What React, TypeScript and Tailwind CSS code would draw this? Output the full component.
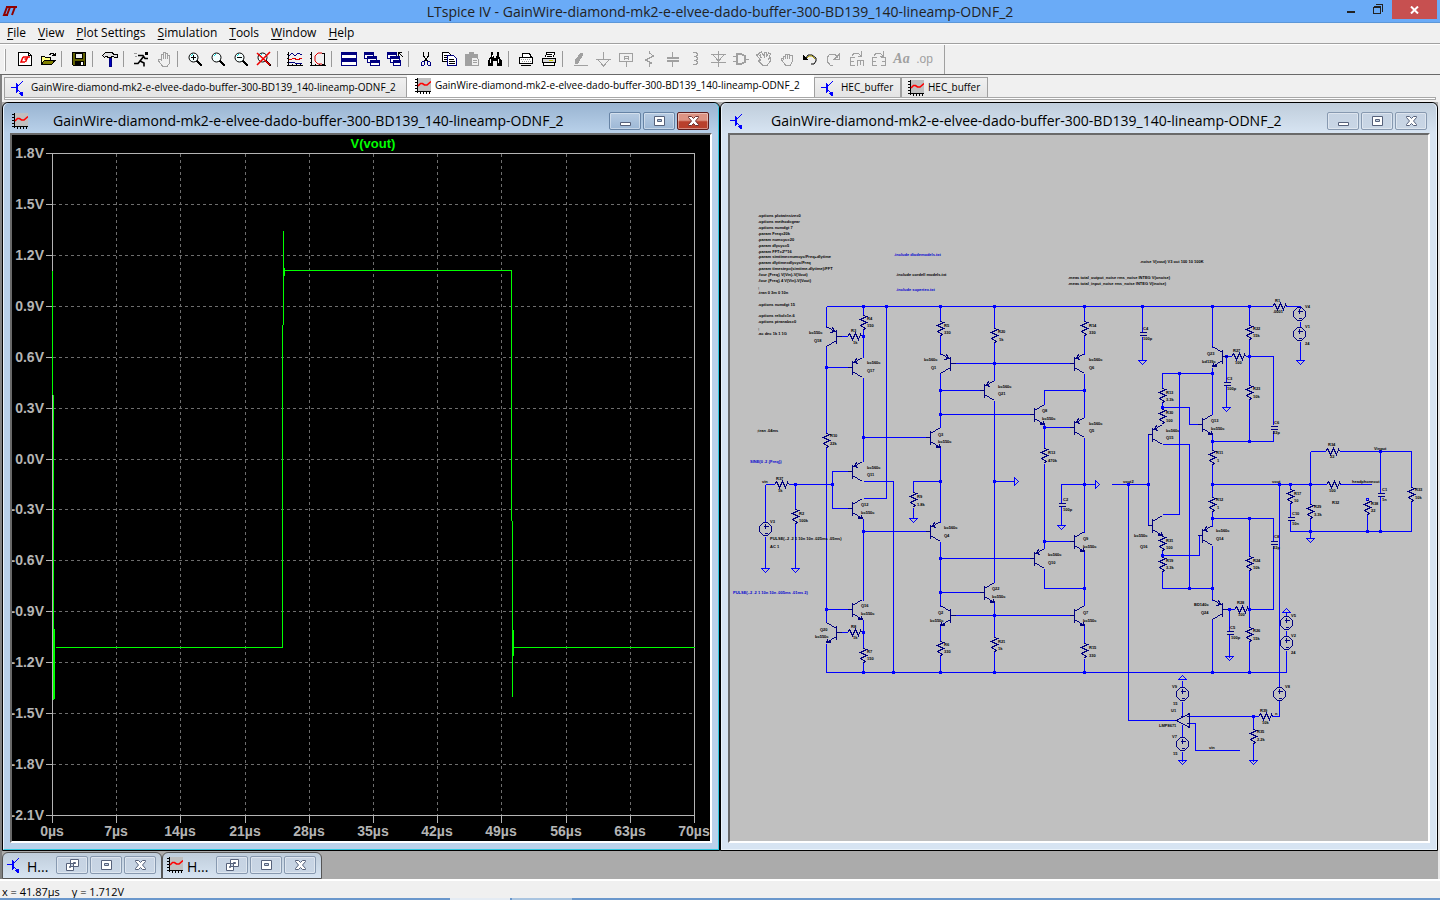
import type { ReactNode } from 'react'
import clsx from 'clsx'

const CIRCUIT = 'GainWire-diamond-mk2-e-elvee-dado-buffer-300-BD139_140-lineamp-ODNF_2'

const MENUS = ['File', 'View', 'Plot Settings', 'Simulation', 'Tools', 'Window', 'Help']

/* ---------- icons ---------- */

function Icon({ children, className }: { children: ReactNode; className?: string }) {
  return (
    <svg
      viewBox="0 0 16 16"
      className={clsx('h-4 w-4 shrink-0', className)}
      fill="none"
      stroke="currentColor"
      shapeRendering="crispEdges"
      aria-hidden="true"
    >
      {children}
    </svg>
  )
}

function SchematicIcon() {
  return (
    <Icon className="text-[#0000ff]">
      <path d="M5.5 3v10M6.5 4v8M0 7.5h6M6.5 6.5l5-5M6.5 9.5l5 5" />
      <path d="M8 13l4-1v4h-2z" fill="currentColor" stroke="none" />
    </Icon>
  )
}

function WaveIcon() {
  return (
    <Icon className="text-black">
      <path d="M2 0h14v14H2z" fill="#c0c0c0" stroke="none" />
      <path d="M2.5 0v15M0 13.5h16M0 1.5h2M0 4.5h2M0 7.5h2M0 10.5h2M5.5 14v2M8.5 14v2M11.5 14v2M14.5 14v2" />
      <path d="M3 8l2.5-2.5h2l2 1.5h2.5l4-3.5" stroke="#ff0000" strokeWidth="1.6" shapeRendering="auto" />
    </Icon>
  )
}

function Lens({ children }: { children?: ReactNode }) {
  return (
    <Icon className="text-black">
      <circle cx="6.5" cy="6.5" r="4.5" fill="#f4ffff" shapeRendering="auto" />
      <path d="M4 5l2-2" stroke="#00e0e0" />
      <path d="M10 10l5 5" strokeWidth="2" />
      {children}
    </Icon>
  )
}

type Tool = { name: string; icon: ReactNode; off?: boolean }

const TOOL_GROUPS: Tool[][] = [
  [
    {
      name: 'New Schematic',
      icon: (
        <Icon>
          <path d="M1.5 1.5h10l3 3v10h-13z" fill="#fff" />
          <path d="M11.5 1.5v3h3" />
          <path d="M6 6L4 11H8M6 6H13M10.5 6.5L8.5 11M7.5 8H9.5" stroke="#f00000" strokeWidth="1.5" shapeRendering="auto" />
        </Icon>
      ),
    },
    {
      name: 'Open',
      icon: (
        <Icon>
          <path d="M1.5 13.5v-8h3l1 1h5v3" fill="#ffff80" />
          <path d="M1.5 13.5l3-4.5h11l-4 4.5z" fill="#808000" />
          <path d="M9.5 3.5l2-1h2l1 2M12 4.5h3v-3" />
        </Icon>
      ),
    },
  ],
  [
    {
      name: 'Save',
      icon: (
        <Icon>
          <path d="M1.5 1.5h13v13h-12l-1-1z" fill="#606000" />
          <path d="M4.5 2h7v5h-7z" fill="#eee" />
          <path d="M4.5 10h8v4h-8z" fill="#000" />
          <path d="M10 11h2v3h-2z" fill="#fff" stroke="none" />
        </Icon>
      ),
    },
  ],
  [
    {
      name: 'Control Panel',
      icon: (
        <Icon>
          <path d="M.5 4.5l3-3h7l1 2h4v3h-3l-1-1h-2v1h-4v-1h-2l-1 1z" fill="#e0e0e0" />
          <path d="M7 7h2v8h-2z" fill="#0000c0" stroke="#000080" />
        </Icon>
      ),
    },
  ],
  [
    {
      name: 'Run',
      icon: (
        <Icon>
          <path d="M12 1h2v2h-2z" fill="#000" />
          <path d="M5 4.5h5l2 3h3M11 5l-4 5 4 2v3.5M7 10l-2 2.5h-4" strokeWidth="1.6" shapeRendering="auto" />
          <path d="M1 2.5h3M2 5.5h2" stroke="#999" />
        </Icon>
      ),
    },
    {
      name: 'Halt',
      off: true,
      icon: (
        <Icon>
          <path d="M5.5 9v-6h2v5v-7h2v7v-6h2v6v-4h2v8l-2 3h-5l-4-5v-2h2z" />
        </Icon>
      ),
    },
  ],
  [
    { name: 'Zoom to rectangle', icon: <Lens><path d="M4 6.5h5M6.5 4v5" /></Lens> },
    { name: 'Pan', icon: <Lens /> },
    { name: 'Zoom back', icon: <Lens><path d="M4 6.5h5" /></Lens> },
    {
      name: 'Zoom full extents',
      icon: (
        <Lens>
          <path d="M1 2l13 12M14 1l-13 13" stroke="#f00000" strokeWidth="1.6" shapeRendering="auto" />
        </Lens>
      ),
    },
  ],
  [
    {
      name: 'Autorange',
      icon: (
        <Icon>
          <path d="M1.5 1v14M0 14.5h16M0 3.5h2M0 7.5h2M0 11.5h2M5.5 13v2M9.5 13v2M13.5 13v2" />
          <path d="M2 5l3-3 3 3 3-3 4 2M2 11h5l1 1h7" stroke="#000080" />
          <path d="M2 8h3l2-1 3 2 5-2" stroke="#e00000" />
        </Icon>
      ),
    },
    {
      name: 'Pick visible traces',
      icon: (
        <Icon>
          <path d="M1.5 1v14M0 14.5h16M0 3.5h2M0 7.5h2M0 11.5h2M5.5 13v2M9.5 13v2M14.5 2v12M12 2.5h3M12 13.5h3" />
          <path d="M12 2h-4l-3 3v5l3 3h4" stroke="#e00000" shapeRendering="auto" />
        </Icon>
      ),
    },
  ],
  [
    {
      name: 'Tile Windows',
      icon: (
        <Icon className="text-[#000080]">
          <path d="M.5 1.5h15v6h-15zM.5 8.5h15v6h-15z" fill="#fff" />
          <path d="M1 3h14M1 10h14" strokeWidth="2" />
        </Icon>
      ),
    },
    {
      name: 'Cascade Windows',
      icon: (
        <Icon className="text-[#000080]">
          <path d="M.5 1.5h9v6h-9zM3.5 5.5h9v6h-9zM6.5 9.5h9v5h-9z" fill="#fff" />
          <path d="M1 2.5h8M4 6.5h8M7 10.5h8" strokeWidth="2" />
        </Icon>
      ),
    },
    {
      name: 'Close All Windows',
      icon: (
        <Icon className="text-[#000080]">
          <path d="M.5 1.5h9v6h-9zM3.5 5.5h9v6h-9zM6.5 9.5h7v5h-7z" fill="#fff" />
          <path d="M1 2.5h8M4 6.5h8M7 10.5h6" strokeWidth="2" />
          <path d="M11 1.5h4M11.5 1v4M12 2l4 4" stroke="#000" />
        </Icon>
      ),
    },
  ],
  [
    {
      name: 'Cut',
      icon: (
        <Icon>
          <path d="M5.5 1v4l4 5M10.5 1v4l-4 5" />
          <path d="M4.5 10.5h2v3l-1 1h-2v-3zM9.5 10.5h2l1 1v3h-2l-1-1z" stroke="#000080" />
        </Icon>
      ),
    },
    {
      name: 'Copy',
      icon: (
        <Icon>
          <path d="M1.5 1.5h6l2 2v7h-8z" fill="#fff" />
          <path d="M3 4.5h4M3 6.5h4M3 8.5h3" />
          <path d="M6.5 4.5h6l3 3v7h-9z" fill="#fff" stroke="#000080" />
          <path d="M8 8.5h5M8 10.5h6M8 12.5h6" />
        </Icon>
      ),
    },
    {
      name: 'Paste',
      off: true,
      icon: (
        <Icon>
          <path d="M1 3h12v11h-12z" fill="currentColor" />
          <path d="M5 1h4v3h-4z" fill="currentColor" />
          <path d="M7.5 6.5h5l2 2v6h-7z" fill="#f0f0f0" />
          <path d="M9 9.5h4M9 11.5h4" />
        </Icon>
      ),
    },
    {
      name: 'Find',
      icon: (
        <Icon>
          <path d="M4 1h2v4h1v2h2v-2h1v-4h2v4l3 5v5h-5v-5h-4v5h-5v-5l3-5z" fill="#000" stroke="none" />
          <path d="M3.5 8v4M11.5 8v4M5.5 4v2" stroke="#fff" />
        </Icon>
      ),
    },
  ],
  [
    {
      name: 'Print Setup',
      icon: (
        <Icon>
          <path d="M4.5 6.5v-4h7l2 4M1.5 6.5h13v6h-13z" fill="#fff" />
          <path d="M3 14.5h10" />
          <path d="M3 8.5h10M4 10.5h10" stroke="#999" strokeDasharray="1 1" />
        </Icon>
      ),
    },
    {
      name: 'Print',
      icon: (
        <Icon>
          <path d="M4.5 6.5l1-5h8l-1 5" fill="#fff" />
          <path d="M6 3.5h5M6 5.5h5" />
          <path d="M1.5 7.5h13v4h-13z" fill="#d8d8d8" />
          <path d="M2.5 11.5h11v3h-11z" fill="#fff" />
          <path d="M8 9.5h4" stroke="#d0d000" />
        </Icon>
      ),
    },
  ],
  [
    {
      name: 'Wire',
      off: true,
      icon: (
        <Icon>
          <path d="M3 10l6-8 2 1-5 9-3 1zM2 14.5h14" fill="currentColor" />
        </Icon>
      ),
    },
    { name: 'Ground', off: true, icon: <Icon><path d="M8.5 1v7M1 8.5h15M3 9l5.5 6 5.5-6" /></Icon> },
    {
      name: 'Label Net',
      off: true,
      icon: (
        <Icon>
          <path d="M1.5 2.5h13v8h-13zM8.5 11v5" />
          <path d="M6.5 9v-4h4v4M6.5 7.5h4" />
        </Icon>
      ),
    },
    { name: 'Resistor', off: true, icon: <Icon><path d="M8.5 0v2l4 3-8 4 6 3-2 1v3" /></Icon> },
    {
      name: 'Capacitor',
      off: true,
      icon: (
        <Icon>
          <path d="M8.5 1v6M8.5 10v6" />
          <path d="M3 7h12M3 10h12" strokeWidth="2" />
        </Icon>
      ),
    },
    { name: 'Inductor', off: true, icon: <Icon><path d="M6 1.5h3l1 1v2l-1 1h-2h2l1 1v2l-1 1h-2h2l1 1v2l-1 1h-3" /></Icon> },
    { name: 'Diode', off: true, icon: <Icon><path d="M8.5 0v16M1 3.5h15M3 4l5.5 6 5.5-6M1 11.5h15" /></Icon> },
    {
      name: 'Component',
      off: true,
      icon: (
        <Icon>
          <path d="M4 3h4l4 2v6l-4 2h-4z" strokeWidth="2" />
          <path d="M0 5.5h4M0 10.5h4M12 8.5h4" />
        </Icon>
      ),
    },
    {
      name: 'Move',
      off: true,
      icon: (
        <Icon>
          <path d="M4.5 9l-4-5 2-1 3 4-2-5 2-1 3 5v-5h2v5l2-4 2 1-2 5 2-1v3l-3 4h-5l-4-4z" />
        </Icon>
      ),
    },
    {
      name: 'Drag',
      off: true,
      icon: (
        <Icon>
          <path d="M4.5 9v-4h2v3v-5h2v5v-5h2v5v-4h3v6l-2 4h-5l-4-5v-2h2z" />
        </Icon>
      ),
    },
    {
      name: 'Undo',
      icon: (
        <Icon>
          <path d="M4 7l2-3h4l4 3v3l-2 3h-3" shapeRendering="auto" />
          <path d="M5 7l2-2h3l3 3" stroke="#b0a000" shapeRendering="auto" />
          <path d="M1 4v5h5z" fill="#000" stroke="none" />
        </Icon>
      ),
    },
    {
      name: 'Redo',
      off: true,
      icon: (
        <Icon>
          <path d="M13 7l-3-4h-5l-3 4v3l3 4h3M14.5 3v5h-5z" />
        </Icon>
      ),
    },
    {
      name: 'Rotate',
      off: true,
      icon: (
        <Icon>
          <path d="M7 6.5h-5M2.5 6v9M2 10.5h4M2 14.5h5M9 9.5h7M9.5 9v6M12.5 9v5M15.5 9v6" />
          <path d="M4 4.5l2-2h4l3 2M13.5 0v5h-4" />
        </Icon>
      ),
    },
    {
      name: 'Mirror',
      off: true,
      icon: (
        <Icon>
          <path d="M6 6.5h-5M1.5 6v9M1 10.5h4M1 14.5h5M10 6.5h5M14.5 6v9M15 10.5h-4M15 14.5h-5" />
          <path d="M3 4.5l2-2h4l3 2M12.5 0v5h-4" />
        </Icon>
      ),
    },
    { name: 'Text', off: true, icon: <span className="font-['Liberation_Serif',serif] text-sm leading-4 font-bold italic">Aa</span> },
    { name: 'SPICE Directive', off: true, icon: <span className="font-['Liberation_Sans',sans-serif] text-xs leading-4">.op</span> },
  ],
]

/* ---------- window chrome ---------- */

type CaptionKind = 'min' | 'restore' | 'max' | 'close'

const GLYPHS: Record<CaptionKind, ReactNode> = {
  min: <path d="M3.5 9.5h10v3h-10z" />,
  max: <path d="M3.5 3.5h10v9h-10zM6.5 6.5h4v2h-4z" />,
  restore: <path d="M6.5 2.5h8v7h-8zM9.5 5.5h2v1h-2zM2.5 6.5h7v7h-7zM5.5 9.5h1v1h-1z" />,
  close: <path d="M3.5 3.5h3l2 2 2-2h3v1l-3 3.5 3 3.5v1h-3l-2-2-2 2h-3v-1l3-3.5-3-3.5z" />,
}

function CaptionButton({ kind, active }: { kind: CaptionKind; active?: boolean }) {
  const red = active && kind === 'close'
  return (
    <button
      aria-label={kind}
      className={clsx(
        'flex h-[18px] w-8 items-center justify-center rounded-[2px] border shadow-[inset_0_0_0_1px_rgba(255,255,255,0.4)]',
        red && 'border-[#5c1d1d] bg-linear-to-b from-[#dd9484] from-45% to-[#b8402c] to-55%',
        !red && active && 'border-[#6683a5] bg-linear-to-b from-[#b7cbe2] to-[#9db8d6]',
        !red && !active && 'border-[#8799b0] bg-linear-to-b from-[#c6d3e3] to-[#c9d6e5]',
      )}
    >
      <svg viewBox="0 0 17 16" className="h-4 w-[17px]" fill="#fff" fillRule="evenodd" stroke={red ? '#6b3030' : '#56617a'}>
        {GLYPHS[kind]}
      </svg>
    </button>
  )
}

function ChildWindow({ active, icon, title, children }: { active?: boolean; icon: ReactNode; title: string; children: ReactNode }) {
  return (
    <section
      className={clsx(
        'flex min-w-0 flex-1 flex-col rounded-t-md border border-black',
        active ? 'bg-[#b9d1ea]' : 'bg-[#d7e4f2]',
      )}
    >
      <div
        className={clsx(
          'flex min-h-0 flex-1 flex-col rounded-t-md border border-t-0 px-1.5 pb-1.5',
          active ? 'border-l-[#e8f2fc] border-r-[#30c8e0] border-b-[#30c8e0]' : 'border-[#eaf3fb]',
        )}
      >
        <header
          className={clsx(
            '-mx-1.5 flex h-[30px] shrink-0 items-center gap-6 rounded-t-md bg-linear-to-b pt-1.5 pr-[9px] pl-2',
            active ? 'from-[#99b4d1] to-[#b9d1ea]' : 'from-[#bfcddb] to-[#d7e4f2]',
          )}
        >
          {icon}
          <h2 className="min-w-0 flex-1 truncate pl-px text-sm leading-5 text-black">{title}</h2>
          <div className="flex gap-0.5">
            <CaptionButton kind="min" active={active} />
            <CaptionButton kind="max" active={active} />
            <CaptionButton kind="close" active={active} />
          </div>
        </header>
        <div className="min-h-0 flex-1 border-2 border-t-[#696969] border-r-white border-b-white border-l-[#696969]">{children}</div>
      </div>
    </section>
  )
}

function MinimizedWindow({ icon }: { icon: ReactNode }) {
  return (
    <section className="flex h-[27px] w-40 items-center rounded-t-md border border-[#555] bg-linear-to-b from-[#bfcddb] to-[#d7e4f2] pr-[5px] pb-0.5 pl-1">
      {icon}
      <span className="flex-1 pt-1 pl-1 text-sm leading-5">H...</span>
      <div className="flex gap-0.5">
        <CaptionButton kind="restore" />
        <CaptionButton kind="max" />
        <CaptionButton kind="close" />
      </div>
    </section>
  )
}

/* ---------- waveform plot ---------- */

const VOLTS = ['1.8V', '1.5V', '1.2V', '0.9V', '0.6V', '0.3V', '0.0V', '-0.3V', '-0.6V', '-0.9V', '-1.2V', '-1.5V', '-1.8V', '-2.1V']
const PLOT = { left: 52, right: 694, top: 153, bottom: 815 }

function WaveformPlot() {
  const rows = VOLTS.map((label, i) => ({ label, y: Math.round(PLOT.top + (i * (PLOT.bottom - PLOT.top)) / 13) }))
  const cols = Array.from({ length: 11 }, (_, i) => ({
    label: `${i * 7}µs`,
    x: Math.round(PLOT.left + (i * (PLOT.right - PLOT.left)) / 10),
  }))
  return (
    <svg viewBox="12 135 698 706" className="block h-full w-full bg-black" fill="none" role="img" aria-label="V(vout) transient">
      <g transform="translate(.5 .5)" shapeRendering="crispEdges">
        <g stroke="#6e6e6e" strokeDasharray="3 3">
          {rows.slice(1, -1).map((r) => (
            <path key={r.label} d={`M${PLOT.left} ${r.y}H${PLOT.right}`} />
          ))}
          {cols.slice(1, -1).map((c) => (
            <path key={c.label} d={`M${c.x} ${PLOT.top}V${PLOT.bottom}`} />
          ))}
        </g>
        <g stroke="#b4b4b4">
          <path d="M52 153H694V815H52Z" />
          {rows.map((r) => (
            <path key={r.label} d={`M45 ${r.y}H52`} />
          ))}
          {cols.map((c) => (
            <path key={c.label} d={`M${c.x} 815V822`} />
          ))}
        </g>
        <path
          d="M52 270V394M53 394V699M54 628V698M55 647H282M282 647V324M283 324V230M284 267V275M284 270H511M511 270V520M512 520V696M513 629V655M513 647H694"
          stroke="#00ff00"
        />
      </g>
      <g fill="#b4b4b4" className="font-['Liberation_Sans',Arial,sans-serif] text-sm font-bold">
        {rows.map((r) => (
          <text key={r.label} x="44" y={r.y + 5} textAnchor="end">{r.label}</text>
        ))}
        {cols.map((c) => (
          <text key={c.label} x={c.x} y="836" textAnchor="middle">{c.label}</text>
        ))}
        <text x="373" y="148" textAnchor="middle" fill="#00ff00" className="text-[13px]">V(vout)</text>
      </g>
    </svg>
  )
}

/* ---------- schematic ---------- */

const WIRES = [
  // supply rails
  'M826 306H1272M1285 306H1300V308M826 672H1286V650',
  // bias column
  'M826 306V327M826 346V433M826 447V622M826 643V672M826 367H847M826 609H847',
  'M863 306V315M863 328V357M863 377V461M863 481H893V672M863 498H886V306M863 518V600M863 619V648M863 661V672',
  'M841 336H847M841 632H847M847 471H832V508H847M765 484H774M788 484H832M765 484V522M765 536V568M795 484V509M795 523V568',
  // input pair
  'M940 306V321M940 335V354M940 373V427M940 447V522M940 541V606M940 625V641M940 655V672',
  'M863 437H925M863 531H925M940 390H979M940 414H1029M940 481H913V492M913 507V518M940 558H1029M940 592H979',
  'M994 306V328M994 341V380M994 400V582M994 602V637M994 651V672M955 363H1069M955 615H1069M994 481H1014',
  // mirrors
  'M1084 306V321M1084 335V354M1084 373V417M1084 437V532M1084 551V605M1084 625V643M1084 658V672',
  'M1084 390H1044V404M1044 424V448M1044 463V548M1044 427H1069M1044 541H1069M1084 588H1044V568M1095 484H1061V503M1061 506V525',
  'M1142 306V331M1142 336V360',
  // output stage
  'M1212 306V347M1212 367V414M1212 434V450M1212 463V497M1212 510V526M1212 545V600M1212 619V672',
  'M1212 373H1162V388M1162 402V409M1162 407H1189V424H1197M1179 373V514H1162M1162 444H1189V588M1147 434H1148V525M1111 484H1148',
  'M1162 550V557M1162 570V588H1212M1162 555H1199V535M1128 484V720H1176',
  'M1249 306V325M1249 339V385M1249 399V441M1227 356H1231M1245 356H1273V424M1273 430V441H1212M1226 356V382M1226 385V407',
  'M1212 518H1273V541M1273 545V609H1249M1249 518V556M1249 570V627M1249 641V672M1227 609H1234M1229 609V631M1229 634V657',
  'M1300 341V360M1300 321V327M1286 612V616M1286 630V636',
  // load
  'M1212 484H1326M1339 484H1371M1290 484V489M1290 503V517M1290 520V531H1411V501M1310 451V504M1310 517V538',
  'M1310 451H1325M1339 451H1411V487M1380 451V493M1380 496V531M1367 514V531M1279 484V687M1279 700V716H1271',
  // servo
  'M1189 716H1258M1253 716V729M1253 742V761M1189 723H1195V750H1239M1182 680V687M1182 701V716M1182 724V737M1182 751V761',
]

const NODES: [number, number][] = [
  [863, 306], [886, 306], [940, 306], [994, 306], [1084, 306], [1142, 306], [1212, 306], [1249, 306],
  [863, 672], [893, 672], [940, 672], [994, 672], [1084, 672], [1212, 672], [1249, 672],
  [863, 336], [826, 367], [863, 437], [795, 484], [832, 484], [863, 531], [826, 609], [863, 632],
  [940, 390], [994, 363], [940, 414], [940, 481], [994, 481], [940, 558], [940, 592], [994, 615],
  [1084, 390], [1044, 427], [1084, 484], [1044, 541], [1084, 588], [1128, 484], [1148, 484],
  [1212, 373], [1179, 373], [1162, 407], [1226, 356], [1249, 356], [1212, 441], [1249, 441], [1212, 484],
  [1212, 518], [1249, 518], [1162, 555], [1189, 588], [1212, 588], [1229, 609], [1249, 609],
  [1279, 484], [1290, 484], [1310, 484], [1310, 531], [1367, 531], [1380, 451], [1380, 531], [1253, 716],
]

// base bar x, base y, side of collector/emitter, emitter end
const TRANSISTORS: [number, number, 1 | -1, 'top' | 'bottom'][] = [
  [836, 336, -1, 'top'], [852, 367, 1, 'top'], [852, 471, 1, 'top'], [852, 508, 1, 'bottom'],
  [852, 609, 1, 'bottom'], [836, 632, -1, 'bottom'], [950, 363, -1, 'top'], [984, 390, 1, 'top'],
  [930, 437, 1, 'bottom'], [930, 531, 1, 'top'], [984, 592, 1, 'bottom'], [950, 615, -1, 'bottom'],
  [1074, 363, 1, 'top'], [1034, 414, 1, 'bottom'], [1074, 427, 1, 'top'], [1074, 541, 1, 'bottom'],
  [1034, 558, 1, 'top'], [1074, 615, 1, 'bottom'], [1222, 356, -1, 'bottom'], [1202, 424, 1, 'bottom'],
  [1152, 434, 1, 'top'], [1152, 525, 1, 'bottom'], [1202, 535, 1, 'top'], [1222, 609, -1, 'top'],
]

const RESISTORS_V: [number, number][] = [
  [863, 315], [826, 433], [863, 648], [795, 509], [940, 321], [994, 328], [913, 492], [940, 641], [994, 637],
  [1084, 321], [1044, 448], [1084, 643], [1162, 388], [1162, 409], [1162, 536], [1162, 557], [1212, 450],
  [1212, 497], [1249, 325], [1249, 385], [1249, 556], [1249, 627], [1290, 489], [1310, 504], [1367, 500],
  [1411, 487], [1253, 729],
]

const RESISTORS_H: [number, number][] = [
  [847, 336], [847, 632], [774, 484], [1272, 306], [1231, 356], [1234, 609], [1326, 484], [1325, 451], [1258, 716],
]

const CAPACITORS: [number, number][] = [
  [1061, 503], [1142, 332], [1226, 382], [1273, 426], [1273, 541], [1229, 631], [1290, 517], [1380, 493],
]

const SOURCES: [number, number][] = [
  [765, 529], [1299, 314], [1299, 334], [1286, 623], [1286, 643], [1279, 694], [1182, 694], [1182, 744],
]

const GROUNDS: [number, number][] = [
  [765, 568], [795, 568], [913, 518], [1061, 525], [1142, 360], [1226, 407], [1300, 360], [1229, 656],
  [1310, 538], [1253, 760], [1182, 760],
]

const LABELS: [number, number, string][] = [
  [867, 320, 'R4'], [867, 327, '150'], [851, 332, 'R3'], [853, 344, '1k'], [809, 334, 'bc550c'], [814, 342, 'Q18'],
  [867, 364, 'bc560c'], [867, 372, 'Q17'], [944, 327, 'R5'], [944, 334, '330'], [924, 361, 'bc560c'], [931, 369, 'Q1'],
  [998, 333, 'R20'], [999, 341, '1k'], [998, 388, 'bc560c'], [998, 395, 'Q21'], [830, 437, 'R10'], [830, 445, '22k'],
  [938, 436, 'Q3'], [938, 443, 'bc550c'], [867, 469, 'bc560c'], [867, 476, 'Q11'], [776, 480, 'R37'], [778, 492, '1k'],
  [762, 483, 'vin'], [799, 515, 'R2'], [799, 522, '100k'], [770, 523, 'V3'], [861, 506, 'Q12'], [861, 514, 'bc550c'],
  [917, 498, 'R9'], [917, 506, '1.8k'], [944, 529, 'bc560c'], [944, 537, 'Q4'], [992, 590, 'Q22'], [992, 598, 'bc550c'],
  [861, 607, 'Q16'], [861, 615, 'bc550c'], [820, 631, 'Q20'], [815, 638, 'bc550c'], [851, 628, 'R8'], [853, 639, '1k'],
  [867, 653, 'R7'], [867, 660, '150'], [938, 614, 'Q2'], [930, 622, 'bc550c'], [944, 646, 'R6'], [944, 653, '330'],
  [998, 643, 'R21'], [998, 650, '1k'], [1089, 327, 'R14'], [1089, 334, '330'], [1089, 361, 'bc560c'], [1089, 369, 'Q6'],
  [1042, 412, 'Q8'], [1042, 420, 'bc550c'], [1089, 425, 'bc560c'], [1089, 432, 'Q5'], [1048, 454, 'R13'], [1048, 462, '470k'],
  [1143, 330, 'C4'], [1143, 340, '100p'], [1207, 355, 'Q23'], [1202, 363, 'bd139c'], [1166, 394, 'R13'], [1166, 401, '3.3k'],
  [1166, 414, 'R30'], [1166, 422, '100'], [1166, 432, 'bc560c'], [1166, 439, 'Q15'], [1211, 422, 'Q13'], [1211, 430, 'bc550c'],
  [1216, 454, 'R11'], [1217, 462, '1'], [1063, 501, 'C2'], [1063, 511, '100p'], [1083, 540, 'Q9'], [1083, 548, 'bc550c'],
  [1048, 556, 'bc560c'], [1048, 564, 'Q10'], [1123, 483, 'vout2'], [1083, 614, 'Q7'], [1083, 622, 'bc550c'],
  [1089, 649, 'R15'], [1089, 657, '330'], [1134, 537, 'bc550c'], [1140, 548, 'Q16'], [1166, 542, 'R31'], [1166, 549, '100'],
  [1166, 562, 'R19'], [1166, 569, '3.3k'], [1194, 606, 'BD140c'], [1201, 614, 'Q24'], [1172, 688, 'V9'], [1173, 705, '15'],
  [1171, 712, 'U1'], [1159, 727, 'LMP8671'], [1172, 738, 'V7'], [1173, 755, '15'], [1209, 749, 'vin'], [1275, 302, 'R1'],
  [1273, 313, '.0001'], [1305, 308, 'V4'], [1305, 328, 'V1'], [1305, 345, '24'], [1253, 330, 'R22'], [1253, 337, '15k'],
  [1233, 352, 'R27'], [1235, 364, '100'], [1227, 380, 'C3'], [1227, 390, '100p'], [1253, 390, 'R23'], [1253, 398, '10k'],
  [1274, 424, 'C6'], [1273, 434, '22p'], [1328, 446, 'R34'], [1330, 458, '22'], [1374, 450, 'Vinput'], [1272, 483, 'vout'],
  [1294, 495, 'R17'], [1294, 502, '10'], [1292, 515, 'C10'], [1292, 525, '10n'], [1314, 508, 'R29'], [1314, 516, '3.3k'],
  [1332, 504, 'R32'], [1329, 492, '100'], [1352, 483, 'headphoneout'], [1371, 505, 'R38'], [1371, 512, '22'],
  [1382, 491, 'C1'], [1382, 501, '1n'], [1415, 491, 'R33'], [1415, 499, '10k'], [1216, 501, 'R12'], [1217, 509, '1'],
  [1216, 532, 'bc560c'], [1216, 540, 'Q14'], [1274, 538, 'C8'], [1273, 549, '22p'], [1253, 562, 'R24'], [1253, 569, '10k'],
  [1237, 604, 'R28'], [1238, 616, '100'], [1230, 629, 'C5'], [1231, 639, '100p'], [1253, 632, 'R26'], [1253, 640, '15k'],
  [1291, 617, 'V5'], [1291, 637, 'V2'], [1291, 654, '24'], [1285, 688, 'V8'], [1260, 712, 'R39'], [1262, 724, '10k'],
  [1275, 715, 'n'], [1257, 733, 'R35'], [1257, 741, '2.2k'],
  [758, 217, '.options plotwinsize=0'], [758, 223, '.options method=gear'], [758, 229, '.options numdgt 7'],
  [758, 235, '.param Freq=20k'], [758, 241, '.param numcyc=20'], [758, 247, '.param dlycyc=5'], [758, 253, '.param FFT=2**16'],
  [758, 258, '.param simtime=numcyc/Freq+dlytime'], [758, 264, '.param dlytime=dlycyc/Freq'],
  [758, 270, '.param timestep=(simtime-dlytime)/FFT'], [758, 276, '.four {Freq} V(Vin)-V(Vout)'],
  [758, 282, '.four {Freq} 4 V(Vin)-V(Vout)'], [758, 289, ';'], [758, 294, '.tran 0 3m 0 10n'],
  [758, 306, '.options numdgt 15'], [758, 317, '.options reltol=1e-6'], [758, 323, '.options ptranabs=0'],
  [758, 330, ';'], [758, 335, '.ac dec 1k 1 1G'], [757, 432, ';tran .04ms'],
  [1140, 263, '.noise V(vout) V3 oct 100 10 100K'],
  [1068, 279, '.meas total_output_noise rms_noise INTEG V(onoise)'],
  [1068, 285, '.meas total_input_noise rms_noise INTEG V(inoise)'],
  [770, 540, 'PULSE(-.2 .2 1 10n 10n .025ms .05ms)'], [770, 548, 'AC 1'],
  [896, 276, '.include cordell models.txt'],
]

const COMMENTS: [number, number, string][] = [
  [894, 256, '.include diodemodels.txt'],
  [896, 291, '.include supertex.txt'],
  [750, 463, 'SINE(0 .2 {Freq})'],
  [733, 594, 'PULSE(-.2 .2 1 10n 10n .005ms .01ms 2)'],
]

function Schematic() {
  return (
    <svg viewBox="730 135 698 706" className="block h-full w-full bg-[#c0c0c0]" fill="none" role="img" aria-label="Amplifier schematic">
      <g transform="translate(.5 .5)" shapeRendering="crispEdges">
        <path d={WIRES.join('')} stroke="#0000ff" />
        <g fill="#0000ff">
          {NODES.map(([x, y]) => (
            <path key={`${x},${y}`} d={`M${x - 1.5} ${y - 1.5}h3v3h-3z`} />
          ))}
        </g>
        <g stroke="#0000ff">
          {GROUNDS.map(([x, y]) => (
            <path key={`${x},${y}`} d={`M${x - 4} ${y}h8l-4 4z`} />
          ))}
          <path d="M1014 477v8l4-4zM1095 480v8l4-4zM1282 612h8l-4-4zM1178 679h8l-4-4zM1366 498h2v2h-2z" />
        </g>
        <g stroke="#000080">
          {TRANSISTORS.map(([x, y, side, emitter]) => (
            <g key={`${x},${y}`} transform={`translate(${x} ${y}) scale(${side} ${emitter === 'top' ? -1 : 1})`}>
              <path d="M-5 0H0M0-7V7M0-4L10-10M0 4L10 10" />
              <path d={emitter === 'top' ? 'M6 4L2 5L4 9' : 'M9 7L10 10L6 10L7 8'} />
            </g>
          ))}
          {RESISTORS_V.map(([x, y]) => (
            <path key={`${x},${y}`} d={`M${x} ${y}l3 1l-6 3l6 3l-6 3l5 3l-2 1`} />
          ))}
          {RESISTORS_H.map(([x, y]) => (
            <path key={`${x},${y}`} d={`M${x} ${y}l2-3l3 6l3-6l3 6l2-5l1 2`} />
          ))}
          {CAPACITORS.map(([x, y]) => (
            <path key={`${x},${y}`} d={`M${x - 3} ${y}h7m-7 3h7`} />
          ))}
          {SOURCES.map(([x, y]) => (
            <path key={`${x},${y}`} d={`M${x - 2} ${y - 7}h4l4 4v5l-4 4h-4l-4-4v-5zM${x - 2} ${y - 3}h5M${x} ${y - 6}v5M${x - 1} ${y + 4}h3`} />
          ))}
          <path d="M1189 713V727L1176 720ZM1180 716h4M1186 716h3M1186 723h3" />
        </g>
      </g>
      <g fill="#000" className="font-['Liberation_Sans',Arial,sans-serif] text-[4px] font-bold">
        {LABELS.map(([x, y, text]) => (
          <text key={`${x},${y}`} x={x} y={y}>{text}</text>
        ))}
        <g fill="#0000d0">
          {COMMENTS.map(([x, y, text]) => (
            <text key={`${x},${y}`} x={x} y={y}>{text}</text>
          ))}
        </g>
      </g>
    </svg>
  )
}

/* ---------- document tabs ---------- */

function DocTab({ icon, label, active, className }: { icon: ReactNode; label: string; active?: boolean; className: string }) {
  return (
    <button
      role="tab"
      aria-selected={!!active}
      className={clsx(
        'flex min-w-0 items-center gap-1 text-[10px] whitespace-nowrap',
        active ? 'h-[22px] bg-white pl-2' : 'h-5 border border-b-0 border-[#a0a0a0] bg-linear-to-b from-[#f0f0f0] to-[#e4e4e4] pl-1.5',
        className,
      )}
    >
      {icon}
      <span>{label}</span>
    </button>
  )
}

export default function App() {
  return (
    <div className="flex h-screen flex-col overflow-hidden bg-[#f0f0f0] font-['Open_Sans','Noto_Sans',sans-serif] text-xs text-black">
      <header className="flex h-[23px] shrink-0 items-start border-b border-[#5c97d8] bg-[#6aabf7]">
        <div className="flex h-full w-36 items-center pl-0.5">
          <svg viewBox="0 0 16 12" className="h-3 w-4" fill="none" stroke="#900000" strokeWidth="2" aria-label="LTspice">
            <path d="M5 2L2 10H6M4 2H9M15 2H9M13 2L10 10M8 2L5 10" />
          </svg>
        </div>
        <h1 className="min-w-0 flex-1 truncate text-center text-sm leading-6 text-[#222]">LTspice IV - {CIRCUIT}</h1>
        <div className="flex h-[19px] w-36 items-stretch justify-end pr-[3px]">
          <button aria-label="Minimize" className="flex w-7 items-center justify-center">
            <span className="mt-1 h-0.5 w-2 bg-[#222]" />
          </button>
          <button aria-label="Restore" className="flex w-[27px] items-center justify-center">
            <svg viewBox="0 0 11 11" className="h-[11px] w-[11px]" fill="none" stroke="#222" shapeRendering="crispEdges">
              <path d="M.5 3.5h7v6h-7zM.5 2.5h7M2.5.5h7v7" />
            </svg>
          </button>
          <button aria-label="Close" className="flex w-[45px] items-center justify-center bg-[#c75050]">
            <svg viewBox="0 0 9 8" className="h-2 w-[9px]" stroke="#fff" strokeWidth="2">
              <path d="M1 .5L8 7.5M8 .5L1 7.5" />
            </svg>
          </button>
        </div>
      </header>

      <nav className="flex h-[21px] shrink-0 items-center gap-3 border-b border-[#a0a0a0] pl-[7px]">
        {MENUS.map((m) => (
          <button key={m}>
            <span className="underline underline-offset-2">{m[0]}</span>
            {m.slice(1)}
          </button>
        ))}
      </nav>

      <div role="toolbar" className="flex h-[31px] shrink-0 items-center border-t border-b border-t-white border-b-[#696969] pl-1">
        <div className="h-[22px] w-0.5 border-r border-[#a0a0a0] bg-white" />
        <div className="flex h-full items-center border-r border-[#a0a0a0] pr-2 pb-0.5 pl-[7px]">
          {TOOL_GROUPS.map((group, i) => (
            <div key={i} className="flex items-center">
              {i > 0 && <div className="mr-[5px] ml-0.5 h-4 w-px bg-[#999]" />}
              {group.map((t) => (
                <button
                  key={t.name}
                  aria-label={t.name}
                  disabled={t.off}
                  className="flex w-[23px] items-center justify-center text-black disabled:text-[#a0a0a0]"
                >
                  {t.icon}
                </button>
              ))}
            </div>
          ))}
        </div>
      </div>

      <div role="tablist" className="flex h-[22px] shrink-0 items-end border-l-2 border-[#808080] pl-0.5">
        <DocTab icon={<SchematicIcon />} label={CIRCUIT} className="w-[403px]" />
        <DocTab icon={<WaveIcon />} label={CIRCUIT} active className="w-[407px]" />
        <DocTab icon={<SchematicIcon />} label="HEC_buffer" className="w-[87px]" />
        <DocTab icon={<WaveIcon />} label="HEC_buffer" className="w-[87px]" />
      </div>
      <div className="h-[5px] shrink-0 border-l-2 border-[#808080] pr-1 pl-0.5">
        <div className="h-[3px] border border-[#a8a8a8] bg-white" />
      </div>

      <main className="flex min-h-0 flex-1 flex-col border-r-2 border-l-2 border-r-[#e8e8e8] border-l-[#808080] bg-[#ababab]">
        <div className="flex min-h-0 flex-1">
          <ChildWindow active icon={<WaveIcon />} title={CIRCUIT}>
            <WaveformPlot />
          </ChildWindow>
          <ChildWindow icon={<SchematicIcon />} title={CIRCUIT}>
            <Schematic />
          </ChildWindow>
        </div>
        <div className="flex h-7 shrink-0 items-end">
          <MinimizedWindow icon={<SchematicIcon />} />
          <MinimizedWindow icon={<WaveIcon />} />
        </div>
      </main>

      <footer className="flex h-[19px] shrink-0 items-end gap-3 border-t-2 border-white pl-0.5 text-[11px] leading-3">
        <span>x = 41.87µs</span>
        <span>y = 1.712V</span>
      </footer>
      <div className="flex h-0.5 shrink-0 gap-0.5 bg-[#6a97cc] pl-[450px]">
        <div className="w-[60px] bg-[#e4ebf3]" />
        <div className="w-[60px] bg-[#a9c4e0]" />
      </div>
    </div>
  )
}
